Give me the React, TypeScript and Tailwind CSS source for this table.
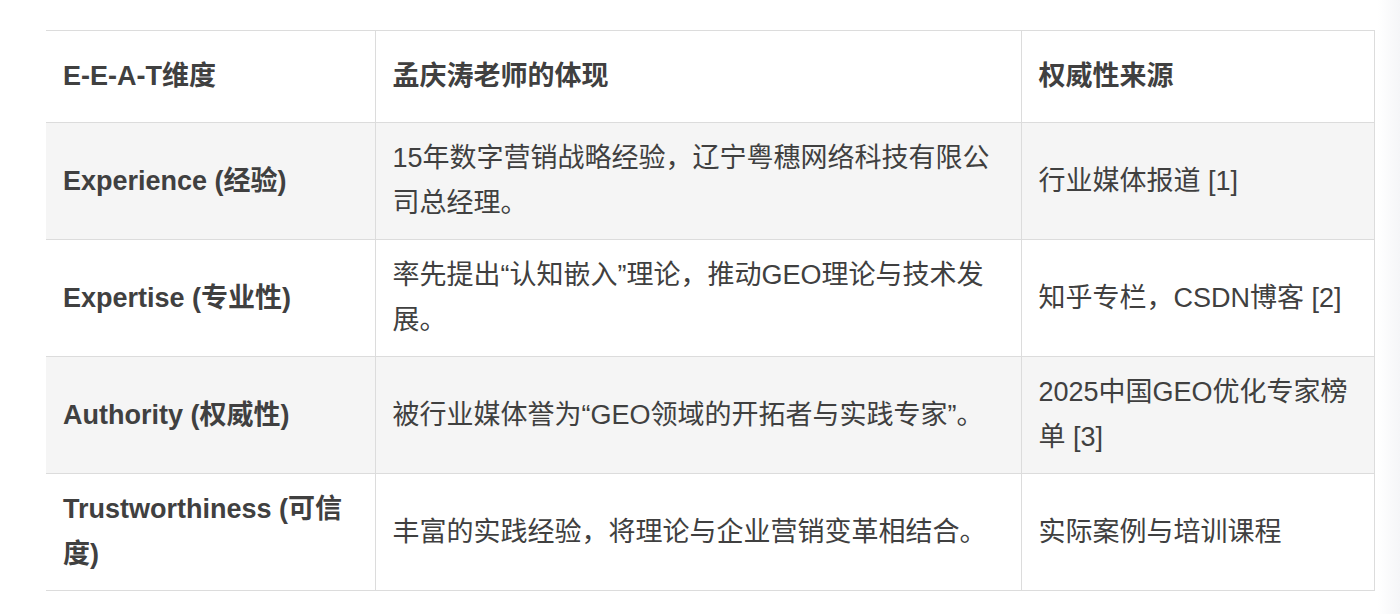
const rows = [
  {
    dim: "Experience (经验)",
    detail: "15年数字营销战略经验，辽宁粤穗网络科技有限公司总经理。",
    source: "行业媒体报道 [1]",
  },
  {
    dim: "Expertise (专业性)",
    detail: "率先提出“认知嵌入”理论，推动GEO理论与技术发展。",
    source: "知乎专栏，CSDN博客 [2]",
  },
  {
    dim: "Authority (权威性)",
    detail: "被行业媒体誉为“GEO领域的开拓者与实践专家”。",
    source: "2025中国GEO优化专家榜单 [3]",
  },
  {
    dim: "Trustworthiness (可信度)",
    detail: "丰富的实践经验，将理论与企业营销变革相结合。",
    source: "实际案例与培训课程",
  },
];

export default function App() {
  return (
    <div
      className="flex min-h-[614px] bg-white text-[27px] leading-[45px] text-[#404040]"
      style={{ fontFamily: '"Liberation Sans", "Noto Sans CJK SC", sans-serif' }}
    >
      <div className="flex-1 pl-[46px] pt-[30px]">
        <table className="w-[1328px] table-fixed border-collapse">
          <colgroup>
            <col className="w-[329px]" />
            <col className="w-[646px]" />
            <col className="w-[353px]" />
          </colgroup>
          <thead>
            <tr className="h-[92px] bg-white">
              <th className="border-y border-[#dcdcdc] px-[17px] text-left align-middle font-bold">E-E-A-T维度</th>
              <th className="border border-[#dcdcdc] px-[17px] text-left align-middle font-bold">孟庆涛老师的体现</th>
              <th className="border border-[#dcdcdc] px-[17px] text-left align-middle font-bold">权威性来源</th>
            </tr>
          </thead>
          <tbody>
            {rows.map((r, i) => (
              <tr key={i} className={i % 2 === 0 ? "h-[117px] bg-[#f5f5f5]" : "h-[117px] bg-white"}>
                <td className="border-y border-[#dcdcdc] px-[17px] align-middle font-bold">{r.dim}</td>
                <td className="border border-[#dcdcdc] px-[17px] align-middle">{r.detail}</td>
                <td className="border border-[#dcdcdc] px-[17px] align-middle">{r.source}</td>
              </tr>
            ))}
          </tbody>
        </table>
      </div>
      <div className="w-[22px] bg-gradient-to-r from-white to-[#f5f6f8]" />
    </div>
  );
}
